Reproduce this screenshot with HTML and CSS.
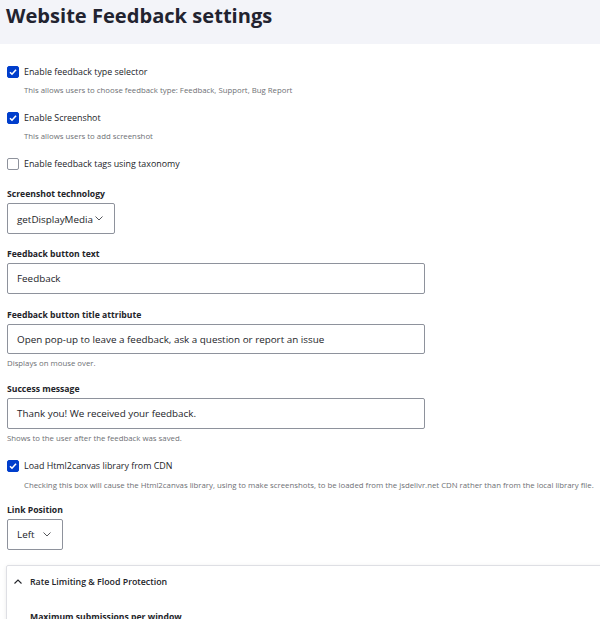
FILE: index.html
```html
<!DOCTYPE html>
<html>
<head>
<meta charset="utf-8">
<link rel="stylesheet" href="styles.css">
</head>
<body>
<header class="page-header">
  <h1 class="page-title">Website Feedback settings</h1>
</header>
<main class="content">
  <div class="cb-item cb-first">
    <div class="cb-row"><span class="cb checked"><svg viewBox="0 0 12 12" width="12" height="12"><path d="M3 6.2 L5 8.2 L9 3.8" fill="none" stroke="#fff" stroke-width="1.6"/></svg></span><span class="cb-label">Enable feedback type selector</span></div>
    <div class="cb-desc">This allows users to choose feedback type: Feedback, Support, Bug Report</div>
  </div>
  <div class="cb-item">
    <div class="cb-row"><span class="cb checked"><svg viewBox="0 0 12 12" width="12" height="12"><path d="M3 6.2 L5 8.2 L9 3.8" fill="none" stroke="#fff" stroke-width="1.6"/></svg></span><span class="cb-label">Enable Screenshot</span></div>
    <div class="cb-desc">This allows users to add screenshot</div>
  </div>
  <div class="cb-item">
    <div class="cb-row"><span class="cb"></span><span class="cb-label">Enable feedback tags using taxonomy</span></div>
  </div>

  <div class="field field-select1">
    <div class="label">Screenshot technology</div>
    <div class="select select-wide"><span>getDisplayMedia</span><svg class="chev" viewBox="0 0 8 5" width="8" height="5"><path d="M0.5 0.5 L4 4 L7.5 0.5" fill="none" stroke="#55565b" stroke-width="1"/></svg></div>
  </div>

  <div class="field">
    <div class="label">Feedback button text</div>
    <div class="input">Feedback</div>
  </div>

  <div class="field field-b">
    <div class="label">Feedback button title attribute</div>
    <div class="input">Open pop-up to leave a feedback, ask a question or report an issue</div>
    <div class="desc">Displays on mouse over.</div>
  </div>

  <div class="field">
    <div class="label">Success message</div>
    <div class="input">Thank you! We received your feedback.</div>
    <div class="desc">Shows to the user after the feedback was saved.</div>
  </div>

  <div class="cb-item cb-cdn">
    <div class="cb-row"><span class="cb checked"><svg viewBox="0 0 12 12" width="12" height="12"><path d="M3 6.2 L5 8.2 L9 3.8" fill="none" stroke="#fff" stroke-width="1.6"/></svg></span><span class="cb-label">Load Html2canvas library from CDN</span></div>
    <div class="cb-desc cb-desc-cdn">Checking this box will cause the Html2canvas library, using to make screenshots, to be loaded from the jsdelivr.net CDN rather than from the local library file.</div>
  </div>

  <div class="field field-link">
    <div class="label">Link Position</div>
    <div class="select select-small"><span>Left</span><svg class="chev" viewBox="0 0 8 5" width="8" height="5"><path d="M0.5 0.5 L4 4 L7.5 0.5" fill="none" stroke="#55565b" stroke-width="1"/></svg></div>
  </div>

  <section class="details">
    <div class="summary"><svg class="chev-up" viewBox="0 0 8 5" width="8" height="5"><path d="M0.5 4.5 L4 1 L7.5 4.5" fill="none" stroke="#232429" stroke-width="1.1"/></svg><span>Rate Limiting &amp; Flood Protection</span></div>
    <div class="details-body">
      <div class="label">Maximum submissions per window</div>
    </div>
  </section>
</main>
</body>
</html>
```

FILE: styles.css
```css
* { box-sizing: border-box; }
html, body { margin: 0; padding: 0; background: #fff; }
body {
  font-family: "Open Sans", "Noto Sans", sans-serif;
  color: #232429;
  width: 600px;
  height: 619px;
  overflow: hidden;
}
.page-header {
  height: 44px;
  background: #f3f4f9;
  padding: 3px 0 0 6px;
}
.page-title {
  margin: 0;
  font-size: 20.1px;
  line-height: 26px;
  font-weight: 700;
  color: #222330;
  letter-spacing: 0;
}
.content { padding-left: 7px; }

.cb-item { margin-top: 16px; }
.cb-first { margin-top: 22px; }
.cb-cdn { margin-top: 16px; }
.cb-row {
  display: flex;
  align-items: center;
  height: 12px;
}
.cb {
  width: 12px;
  height: 12px;
  border-radius: 2px;
  border: 1px solid #8e929c;
  background: #fff;
  flex: none;
  display: flex;
}
.cb.checked { background: #003ecc; border-color: #003ecc; }
.cb.checked svg { margin: -1px; }
.cb-label {
  margin-left: 5px;
  font-size: 8.9px;
  line-height: 12px;
  color: #232429;
}
.cb-desc {
  margin: 6px 0 0 17px;
  font-size: 7.8px;
  line-height: 12px;
  color: #6e6f74;
  white-space: nowrap;
}
.cb-desc-cdn { margin-top: 7px; }

.field { margin-top: 14px; }
.field-select1 { margin-top: 18px; }
.field-b { margin-top: 15px; }
.field-link { margin-top: 13px; }
.label {
  font-size: 8.65px;
  line-height: 12px;
  font-weight: 700;
  color: #232429;
  margin-bottom: 3px;
}
.input {
  width: 418px;
  height: 30.5px;
  border: 1px solid #8e929c;
  border-radius: 2px;
  padding-left: 9px;
  display: flex;
  align-items: center;
  font-size: 9.85px;
  color: #232429;
}
.desc {
  margin-top: 3px;
  font-size: 7.8px;
  line-height: 12px;
  color: #6e6f74;
}
.select {
  height: 31px;
  border: 1px solid #8e929c;
  border-radius: 2px;
  padding-left: 9px;
  display: flex;
  align-items: center;
  font-size: 9.85px;
  color: #232429;
}
.select-wide { width: 108px; }
.select-wide .chev { margin-left: 2px; }
.select-small { width: 56px; }
.select-small .chev { margin-left: 8px; }

.details {
  margin-top: 15px;
  margin-left: -1px;
  width: 620px;
  height: 80px;
  border: 1px solid #dedfe4;
  border-radius: 2px;
  box-shadow: 0 1px 4px rgba(0,0,0,0.08);
}
.summary {
  height: 32px;
  display: flex;
  align-items: center;
  padding-left: 7px;
  font-size: 8.8px;
  font-weight: 600;
  color: #232429;
}
.chev-up { margin-right: 8px; }
.details-body { padding: 13px 0 0 23px; }
```
